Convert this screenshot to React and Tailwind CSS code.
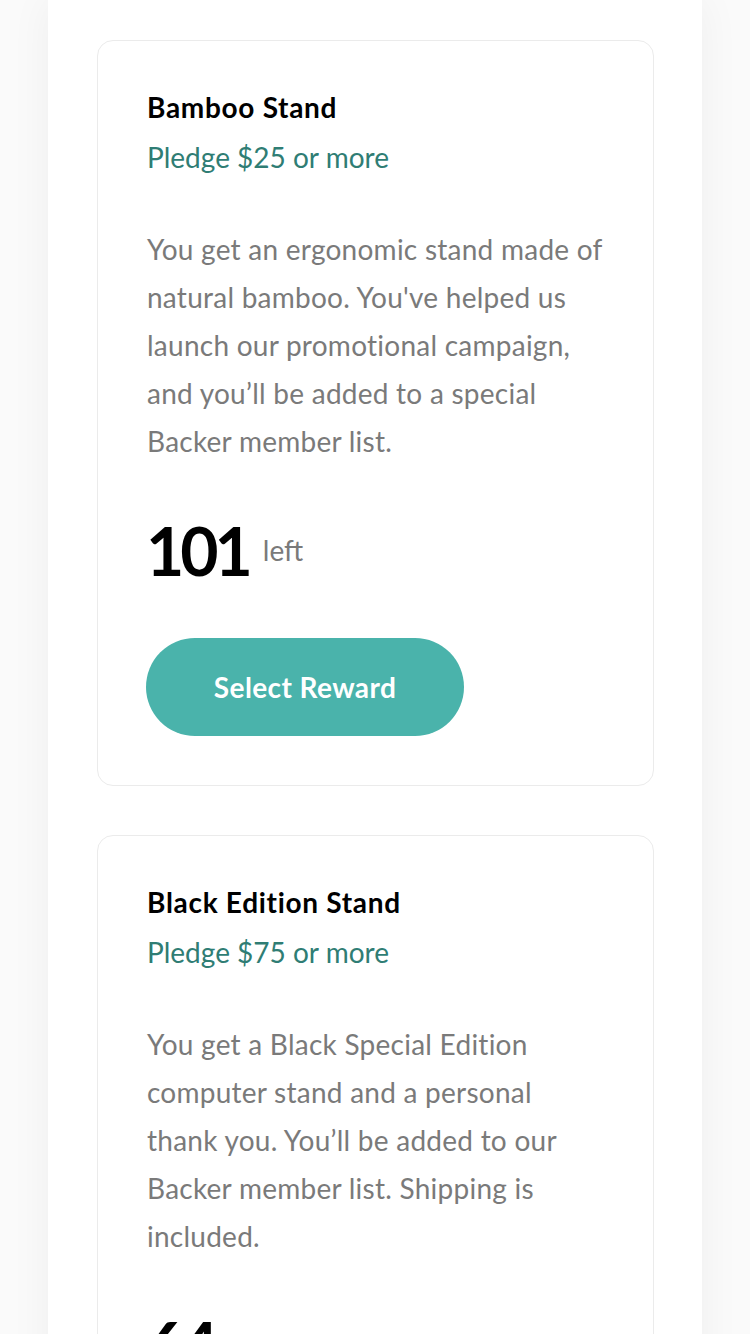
const rewards = [
  {
    name: "Bamboo Stand",
    pledge: "Pledge $25 or more",
    lines: [
      "You get an ergonomic stand made of",
      "natural bamboo. You've helped us",
      "launch our promotional campaign,",
      "and you’ll be added to a special",
      "Backer member list.",
    ],
    left: 101,
  },
  {
    name: "Black Edition Stand",
    pledge: "Pledge $75 or more",
    lines: [
      "You get a Black Special Edition",
      "computer stand and a personal",
      "thank you. You’ll be added to our",
      "Backer member list. Shipping is",
      "included.",
    ],
    left: 64,
  },
];

function RewardCard({ reward }) {
  return (
    <div className="rounded-2xl border border-[#ebebeb] bg-white pl-[48px] pr-12 pt-12 pb-[49px]">
      <h3 className="pl-px text-[28px] leading-[36px] font-bold text-black tracking-[0.7px]">
        {reward.name}
      </h3>
      <p className="pl-px mt-[14px] text-[28px] leading-[36px] text-[#2f7d74]">
        {reward.pledge}
      </p>
      <p className="pl-px mt-[50px] text-[28px] leading-[48px] text-[#7a7a7a] tracking-[0.25px] whitespace-nowrap">
        {reward.lines.map((l, i) => (
          <span key={i} className="block">
            {l}
          </span>
        ))}
      </p>
      <div className="mt-[54px] flex items-center gap-[14px]">
        <span className="text-[66px] leading-[64px] font-bold text-black tracking-[-4px]">
          {reward.left}
        </span>
        <span className="text-[28px] leading-[36px] text-[#7a7a7a] -mt-[2px]">left</span>
      </div>
      <button className="mt-[55px] h-[98px] w-[318px] rounded-full bg-[#4ab3ab] text-[28px] font-bold text-white tracking-[0.4px]">
        Select Reward
      </button>
    </div>
  );
}

export default function App() {
  return (
    <div
      className="min-h-screen bg-[#fafafa] overflow-hidden"
      style={{ fontFamily: "Lato, 'Open Sans', sans-serif" }}
    >
      <div className="mx-12 bg-white shadow-[0_0_40px_rgba(0,0,0,0.05)] pl-[49px] pr-[48px] pt-10 pb-12 min-h-[1334px]">
        <div className="flex flex-col gap-[49px]">
          {rewards.map((r) => (
            <RewardCard key={r.name} reward={r} />
          ))}
        </div>
      </div>
    </div>
  );
}
